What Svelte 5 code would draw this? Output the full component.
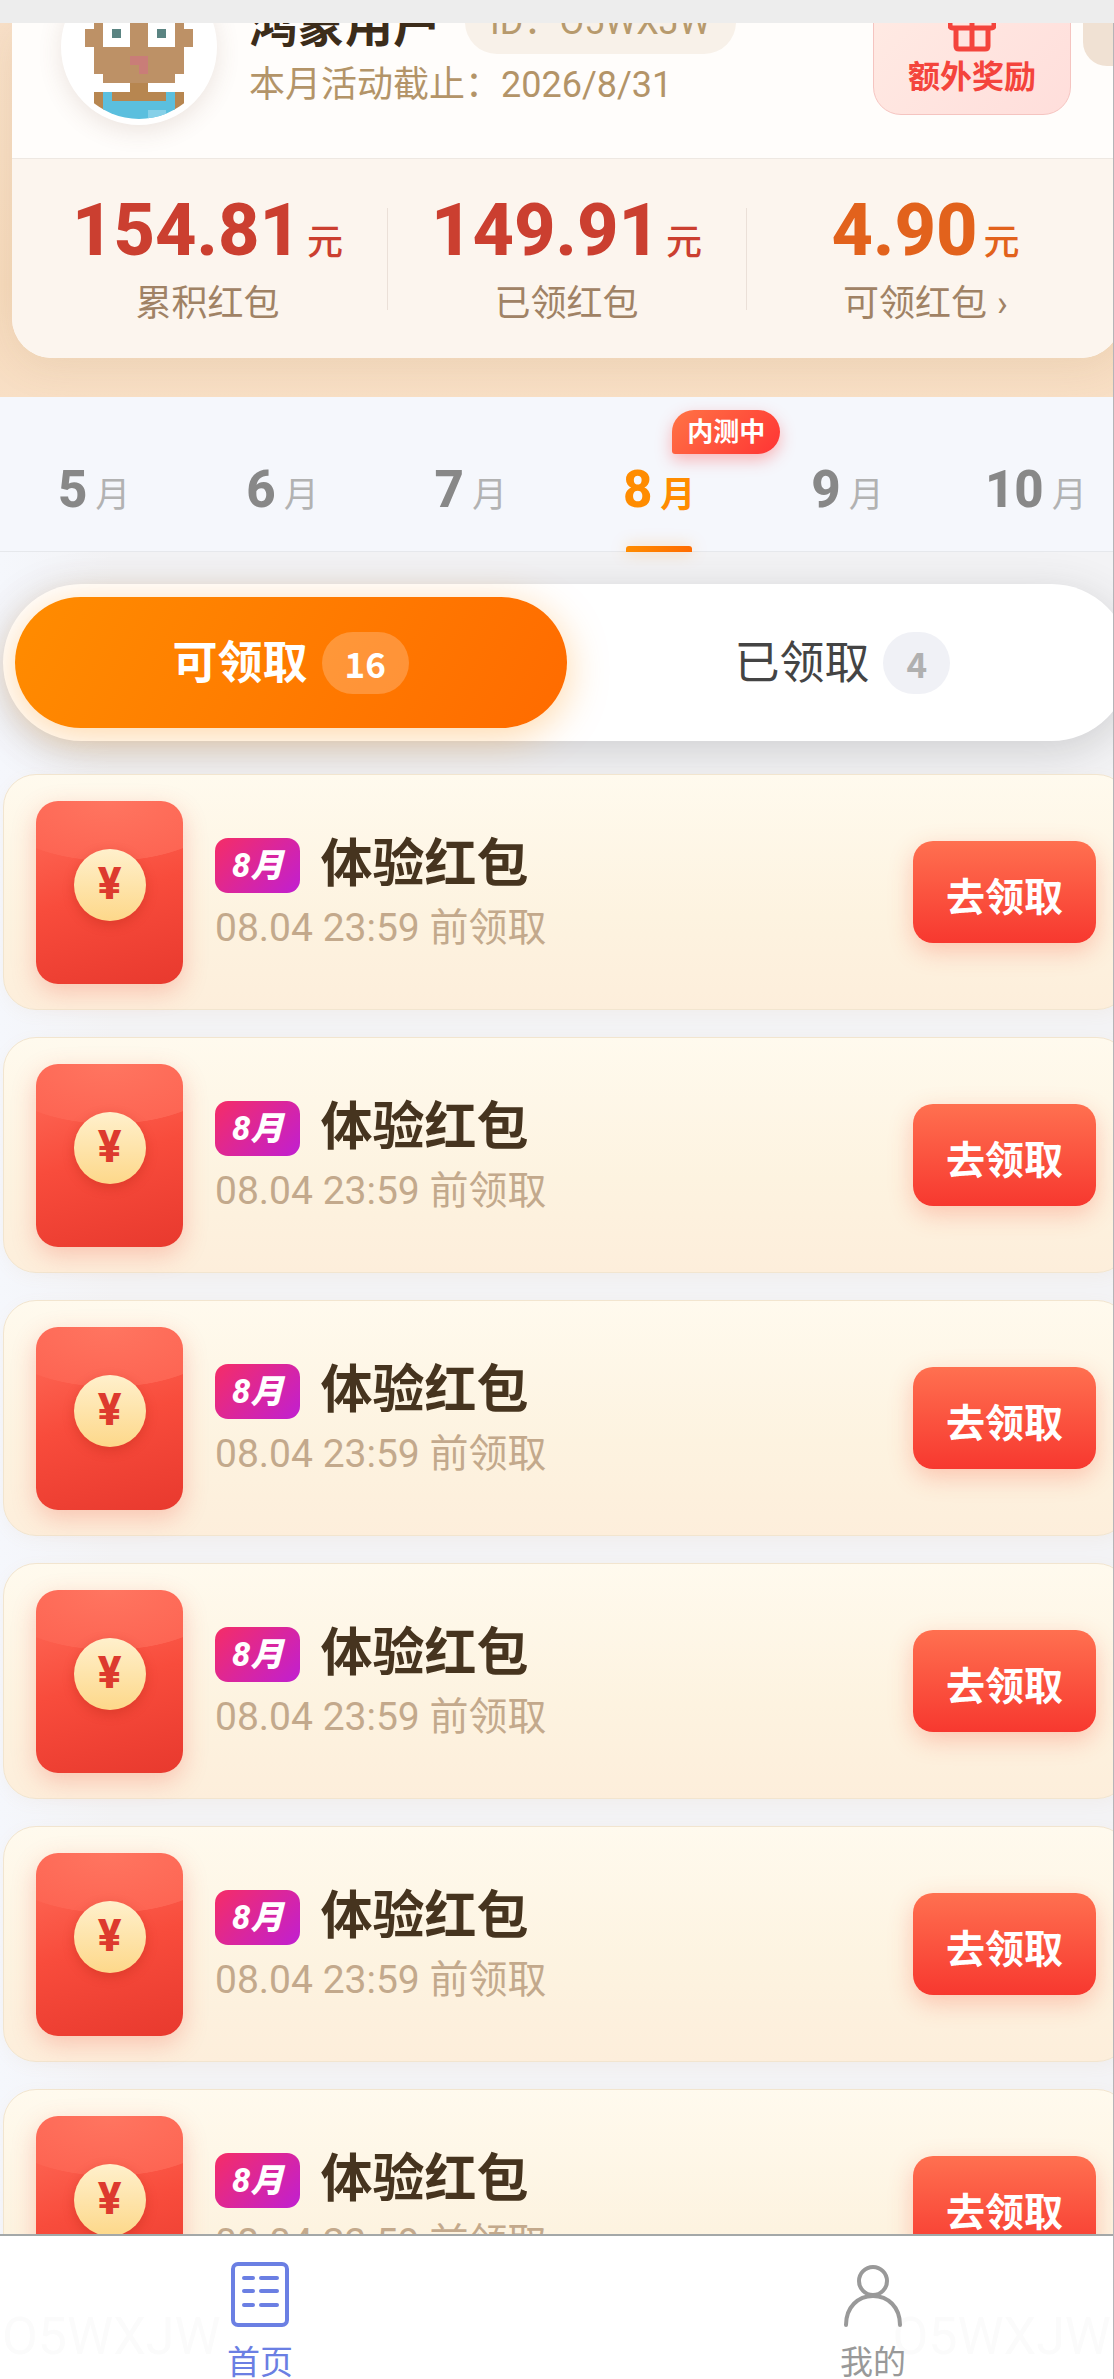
<script lang="ts">
	const userId = 'O5WXJW';

	const stats = [
		{ value: '154.81', label: '累积红包', warm: false, more: false },
		{ value: '149.91', label: '已领红包', warm: false, more: false },
		{ value: '4.90', label: '可领红包', warm: true, more: true }
	];

	const months = [5, 6, 7, 8, 9, 10];
	let currentMonth = $state(8);

	const tabs = [
		{ key: 'todo', label: '可领取', count: 16 },
		{ key: 'done', label: '已领取', count: 4 }
	];
	let currentTab = $state('todo');

	const packets = Array.from({ length: 6 }, (_, i) => ({
		id: i,
		month: 8,
		title: '体验红包',
		deadline: '08.04 23:59 前领取'
	}));
</script>

<svelte:head>
	<title>红包活动</title>
</svelte:head>

<div class="screen">
	<div class="page">
		<header class="hero">
			<div class="profile-card">
				<div class="profile">
					<svg class="avatar" viewBox="0 0 16 16" shape-rendering="crispEdges" aria-hidden="true">
						<path fill="#bd9166" d="M3 2h10v9h-1v1H4v-1H3zM2 6h1v2H2zM13 6h1v2h-1z" />
						<path fill="#fff" d="M4 5h3v3H4zM9 5h3v3H9z" />
						<path fill="#5a8482" d="M5 6h1v1H5zM10 6h1v1h-1z" />
						<path fill="#c97d78" d="M7 9h2v2H8v-1H7z" />
						<path fill="#b78650" d="M7 12h2v1H7zM3 13h10v2H3z" />
						<path fill="#5bbfde" d="M4 13h1v1h6v-1h1v3H4z" />
						<path fill="#86d0e8" d="M9 15h2v1H9z" />
					</svg>
					<div class="user">
						<div class="user-line">
							<h1>鸿蒙用户</h1>
							<span class="user-id">ID：{userId}</span>
						</div>
						<p>本月活动截止：2026/8/31</p>
					</div>
					<button class="bonus">
						<svg viewBox="0 0 48 50" aria-hidden="true">
							<path
								fill="none"
								stroke="currentColor"
								stroke-width="5"
								stroke-linejoin="round"
								d="M5 14h38q3 0 3 3v6q0 3-3 3H5q-3 0-3-3v-6q0-3 3-3zM8 26v18q0 3 3 3h26q3 0 3-3V26M24 14v33M24 14q-12 0-12-6 0-4 4-4 6 0 8 10 2-10 8-10 4 0 4 4 0 6-12 6"
							/>
						</svg>
						额外奖励
					</button>
					<button class="side-button" aria-label="更多"></button>
				</div>
				<div class="stats">
					{#each stats as stat}
						<div class="stat" class:warm={stat.warm}>
							<div class="amount">{stat.value}<small>元</small></div>
							<div class="label">{stat.label}{#if stat.more}<span>›</span>{/if}</div>
						</div>
					{/each}
				</div>
			</div>
		</header>

		<nav class="months">
			{#each months as month}
				<button
					class="month"
					class:active={month === currentMonth}
					onclick={() => (currentMonth = month)}
				>
					<b>{month}</b><span>月</span>
					{#if month === 8}
						<em>内测中</em>
					{/if}
				</button>
			{/each}
		</nav>

		<main>
			<div class="segment">
				{#each tabs as tab}
					<button class:active={tab.key === currentTab} onclick={() => (currentTab = tab.key)}>
						<span class="name">{tab.label}</span>
						<span class="count">{tab.count}</span>
					</button>
				{/each}
			</div>

			<ul class="packets">
				{#each packets as packet (packet.id)}
					<li class="packet">
						<div class="envelope"><span>¥</span></div>
						<div class="info">
							<div class="title-line">
								<span class="tag">{packet.month}月</span>
								<h2>{packet.title}</h2>
							</div>
							<p>{packet.deadline}</p>
						</div>
						<button class="claim">去领取</button>
					</li>
				{/each}
			</ul>
		</main>
	</div>

	<nav class="tabbar">
		<div class="watermark" aria-hidden="true">
			<span>{userId}</span>
			<span>{userId}</span>
		</div>
		<a href="#home" class="active">
			<svg viewBox="0 0 68 68" aria-hidden="true">
				<rect x="7" y="4" width="54" height="61" rx="5" />
				<path d="M18 18h9M35 18h16M18 31h9M35 31h16M18 45h9M35 45h16" />
			</svg>
			首页
		</a>
		<a href="#mine">
			<svg viewBox="0 0 68 68" aria-hidden="true">
				<circle cx="34" cy="21" r="14" />
				<path d="M7 65C7 47 19 36 34 36s27 11 27 29" />
			</svg>
			我的
		</a>
	</nav>
</div>

<style>
	:global(body) {
		background: #f5f7fc;
	}

	.screen {
		position: relative;
		height: 100vh;
		display: flex;
		flex-direction: column;
		overflow: hidden;
		box-sizing: border-box;
		border-top: 23px solid #ededed;
		font-family: Roboto, 'Noto Sans CJK SC', sans-serif;
		color: #46341f;
	}

	.screen::after {
		content: '';
		position: absolute;
		top: 0;
		right: 0;
		bottom: 0;
		width: 1px;
		background: #b4b4b8;
	}

	/* the content is a little wider than the window and runs off to the right */
	.page {
		flex: 1;
		min-height: 0;
		width: calc(100% + 19px);
		overflow: hidden;
		display: flex;
		flex-direction: column;
	}

	h1,
	h2,
	p,
	ul {
		margin: 0;
		padding: 0;
	}

	button {
		border: none;
		background: none;
		padding: 0;
		font-family: inherit;
		cursor: pointer;
	}

	/* header */
	.hero {
		flex: none;
		padding: 0 12px 39px;
		background: linear-gradient(#f8e0c8, #f6dabc 70%, #f8dfc5);
	}

	.profile-card {
		border-radius: 0 0 40px 40px;
		background: #fffdfb;
		box-shadow: 0 8px 40px rgba(160, 120, 80, 0.12);
		overflow: hidden;
	}

	.profile {
		display: flex;
		align-items: flex-start;
		height: 135px;
		padding: 0 0 0 49px;
	}

	.avatar {
		width: 144px;
		height: 144px;
		margin-top: -54px;
		border: 6px solid #fff;
		border-radius: 50%;
		background: #fff;
		box-shadow: 0 6px 24px rgba(120, 80, 60, 0.14);
	}

	.user {
		flex: 1;
		margin: -37px 0 0 32px;
	}

	.user-line {
		display: flex;
		align-items: center;
		gap: 24px;
	}

	h1 {
		padding-top: 8px;
		font-size: 48px;
		line-height: 64px;
		font-weight: 700;
		color: #3c2c1a;
	}

	.user-id {
		padding: 0 25px;
		border-radius: 32px;
		background: #f8f1e9;
		color: #b79a6d;
		font-size: 36px;
		line-height: 64px;
	}

	.user p {
		margin-top: 3px;
		font-size: 36px;
		line-height: 48px;
		color: #b39468;
	}

	.bonus {
		display: flex;
		flex-direction: column;
		align-items: center;
		width: 198px;
		margin-top: -36px;
		padding: 14px 0 13px;
		border: 1px solid #f5c4c0;
		border-radius: 28px;
		background: linear-gradient(135deg, #ffebe4, #ffdedb);
		color: #f4443c;
		font-size: 32px;
		line-height: 48px;
		font-weight: 700;
		box-sizing: border-box;
	}

	.bonus svg {
		width: 48px;
		height: 50px;
		margin-bottom: 1px;
	}

	.side-button {
		width: 38px;
		height: 43px;
		margin-left: 12px;
		border-radius: 0 0 0 24px;
		background: #f0e1d3;
	}

	.stats {
		display: grid;
		grid-template-columns: repeat(3, 1fr);
		padding: 34px 16px 24px;
		border-top: 1px solid #eee8e2;
		background: #fcf5ee;
	}

	.stat {
		position: relative;
		height: 141px;
		text-align: center;
		color: #cb3f30;
	}

	.stat + .stat::before {
		content: '';
		position: absolute;
		left: 0;
		top: 15px;
		height: 102px;
		width: 1px;
		background: #ebe0d8;
	}

	.stat.warm {
		color: #e2621c;
	}

	.amount {
		font-size: 72px;
		line-height: 76px;
		font-weight: 800;
	}

	.amount small {
		margin-left: 6px;
		font-size: 36px;
		font-weight: 500;
	}

	.label {
		font-size: 36px;
		line-height: 46px;
		color: #a08265;
	}

	.label span {
		margin-left: 10px;
	}

	/* months */
	.months {
		flex: none;
		display: grid;
		grid-template-columns: repeat(6, 1fr);
		height: 154px;
		padding-right: 3px;
		border-bottom: 1px solid #e6e8ec;
		background: #f5f7fc;
	}

	.month {
		position: relative;
		padding-top: 38px;
		color: #888;
		font-size: 51px;
		line-height: 64px;
	}

	.month b {
		font-weight: 800;
	}

	.month span {
		margin-left: 8px;
		font-size: 35px;
		color: #b2b2b2;
	}

	.month.active,
	.month.active span {
		color: #ff8c00;
		font-weight: 700;
	}

	.month.active::after {
		content: '';
		position: absolute;
		left: 50%;
		bottom: -1px;
		width: 66px;
		height: 6px;
		margin-left: -33px;
		border-radius: 3px 3px 0 0;
		background: linear-gradient(90deg, #ff8c00, #ff6b00);
		box-shadow: 0 0 16px rgba(255, 140, 0, 0.35);
	}

	.month em {
		position: absolute;
		left: 57%;
		top: 13px;
		padding: 0 15px;
		border-radius: 22px 22px 22px 3px;
		background: linear-gradient(135deg, #ff7445, #ff3434);
		box-shadow: 0 6px 16px rgba(255, 60, 60, 0.35);
		color: #fff;
		font-size: 26px;
		line-height: 44px;
		font-style: normal;
		font-weight: 700;
		white-space: nowrap;
	}

	/* segment */
	main {
		flex: none;
		padding: 32px 3px 0;
		background: linear-gradient(90deg, #f5f7fc, #f3f3f5 10%);
	}

	.segment {
		display: grid;
		grid-template-columns: 1fr 1fr;
		padding: 13px 12px;
		border-radius: 80px;
		background: #fff;
		box-shadow: 0 10px 44px rgba(60, 60, 60, 0.2);
	}

	.segment button {
		display: flex;
		align-items: center;
		justify-content: center;
		gap: 14px;
		height: 131px;
		border-radius: 66px;
		color: #444;
		font-size: 45px;
		font-weight: 400;
	}

	.segment button.active {
		background: linear-gradient(120deg, #ff8c00, #ff6b00);
		box-shadow: 0 8px 40px rgba(255, 140, 0, 0.35);
		color: #fff;
		font-weight: 700;
	}

	.name {
		padding-bottom: 6px;
	}

	.count {
		padding: 0 23px;
		border-radius: 31px;
		background: #f0f1f6;
		color: #b0b0b0;
		font-family: 'Noto Sans CJK SC', sans-serif;
		font-size: 35px;
		line-height: 62px;
		font-weight: 700;
	}

	.active .count {
		background: rgba(255, 255, 255, 0.22);
		color: #fff;
	}

	/* red packets */
	.packets {
		display: flex;
		flex-direction: column;
		gap: 27px;
		padding: 33px 0 27px;
		list-style: none;
	}

	.packet {
		display: flex;
		align-items: center;
		height: 236px;
		padding: 0 33px 0 32px;
		border: 1px solid #f2e5cf;
		border-radius: 33px;
		box-sizing: border-box;
		background: linear-gradient(#fffaee, #fdf3e0 60%, #fdeedb);
		box-shadow: 0 4px 16px rgba(200, 160, 100, 0.06);
	}

	.envelope {
		position: relative;
		display: flex;
		justify-content: center;
		width: 147px;
		height: 183px;
		border-radius: 22px;
		background:
			radial-gradient(ellipse 120px 60px at 50% 0, #ff7560, #fd6553 99%, transparent),
			linear-gradient(165deg, #ff6f5c, #f84c3c 50%, #e8392e);
		box-shadow: 0 8px 24px rgba(240, 70, 50, 0.26);
	}

	.envelope span {
		width: 72px;
		height: 72px;
		margin-top: 48px;
		border-radius: 50%;
		background: linear-gradient(#fff0cc, #fdd88a);
		box-shadow: 0 4px 12px rgba(160, 30, 10, 0.28);
		color: #dd3a2e;
		font-size: 44px;
		line-height: 70px;
		font-weight: 800;
		text-align: center;
	}

	.info {
		flex: 1;
		margin-left: 32px;
		padding-top: 2px;
	}

	.title-line {
		display: flex;
		align-items: center;
		gap: 20px;
	}

	.tag {
		padding: 0 17px;
		border-radius: 13px;
		background: linear-gradient(135deg, #f52d66, #c01fd2);
		color: #fff;
		font-size: 33px;
		line-height: 55px;
		font-style: italic;
		font-weight: 800;
	}

	h2 {
		font-size: 52px;
		line-height: 68px;
		font-weight: 700;
	}

	.info p {
		margin-top: 2px;
		font-size: 39px;
		line-height: 54px;
		color: #c3a98c;
	}

	.claim {
		width: 183px;
		height: 102px;
		padding-top: 4px;
		border-radius: 20px;
		background: linear-gradient(#ff7050, #f7382f);
		box-shadow: 0 8px 24px rgba(250, 80, 50, 0.28);
		color: #fff;
		font-size: 39px;
		font-weight: 700;
	}

	/* bottom bar */
	.tabbar {
		position: relative;
		flex: none;
		display: flex;
		justify-content: space-between;
		width: calc(100% + 19px);
		height: 145px;
		padding: 24px 226px 0;
		box-sizing: border-box;
		border-top: 2px solid #a4a8a8;
		background: #fff;
	}

	.watermark {
		position: absolute;
		left: 2px;
		right: 22px;
		bottom: 12px;
		display: flex;
		justify-content: space-between;
		color: #fbfbfb;
		font-size: 52px;
		line-height: 60px;
		pointer-events: none;
	}

	.tabbar a {
		position: relative;
		display: flex;
		flex-direction: column;
		align-items: center;
		color: #999;
		font-size: 33px;
		line-height: 32px;
		text-decoration: none;
	}

	.tabbar a.active {
		color: #6b7fe3;
	}

	.tabbar svg {
		flex: none;
		width: 68px;
		height: 68px;
		margin-bottom: 19px;
		fill: none;
		stroke: currentColor;
		stroke-width: 4;
		stroke-linecap: round;
	}
</style>
